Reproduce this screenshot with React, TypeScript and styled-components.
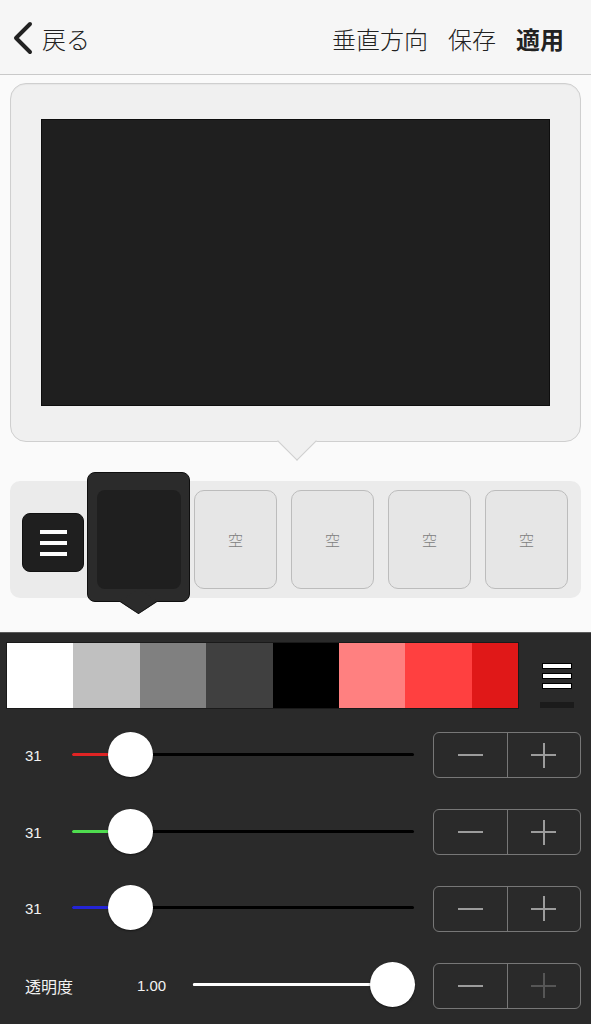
import React from 'react'
import styled, { createGlobalStyle } from 'styled-components'

const GlobalStyle = createGlobalStyle`
    html, body {
        margin: 0;
        padding: 0;
        background: #fafafa;
    }
    * {
        box-sizing: border-box;
    }
`

const JP = `"Noto Sans CJK JP", "Noto Sans", sans-serif`
const LATIN = `"Liberation Sans", "Noto Sans CJK JP", sans-serif`

type Channel = {
    label: string
    value: number
    fill: string
}

const CHANNELS: Channel[] = [
    { label: "31", value: 31 / 255, fill: "#e02424" },
    { label: "31", value: 31 / 255, fill: "#4fdc4f" },
    { label: "31", value: 31 / 255, fill: "#2424d6" },
]

const SWATCHES = ["#ffffff", "#c0c0c0", "#808080", "#404040", "#000000", "#ff8080", "#ff4040", "#e01818"]

const THUMB = 45

const Slider: React.FC<{ width: number; value: number; fill: string; rest: string }> = ({ width, value, fill, rest }) => {
    const center = THUMB / 2 + value * (width - THUMB)
    return (
        <SliderBox $width={width}>
            <TrackLine $color={rest} />
            <TrackFill style={{ width: center, background: fill }} />
            <Thumb style={{ left: center - THUMB / 2 }} />
        </SliderBox>
    )
}

const Stepper: React.FC<{ plusDisabled?: boolean }> = ({ plusDisabled }) => (
    <StepperBox>
        <StepButton>
            <MinusGlyph />
        </StepButton>
        <StepButton $divider>
            <PlusGlyph $disabled={plusDisabled} />
        </StepButton>
    </StepperBox>
)

const App: React.FC = () => {
    return (
        <>
            <GlobalStyle />
            <Root>
                <Header>
                    <BackButton>
                        <svg width="22" height="34" viewBox="0 0 22 34">
                            <polyline points="18,3 4,17 18,31" fill="none" stroke="#222" strokeWidth="4" strokeLinecap="round" strokeLinejoin="round" />
                        </svg>
                        <HeaderText>戻る</HeaderText>
                    </BackButton>
                    <HeaderActions>
                        <HeaderText>垂直方向</HeaderText>
                        <HeaderText>保存</HeaderText>
                        <HeaderText $bold>適用</HeaderText>
                    </HeaderActions>
                </Header>

                <Content>
                    <PreviewBubble>
                        <Screen />
                    </PreviewBubble>

                    <SlotStrip>
                        <MenuButton>
                            <Bars $width={27} $height={4} $gap={7} />
                        </MenuButton>
                        <SelectedSlot>
                            <SelectedInner />
                        </SelectedSlot>
                        <EmptySlots>
                            {[0, 1, 2, 3].map((i) => (
                                <EmptySlot key={i}>空</EmptySlot>
                            ))}
                        </EmptySlots>
                    </SlotStrip>
                </Content>

                <Panel>
                    <SwatchRow>
                        <Swatches>
                            {SWATCHES.map((c, i) => (
                                <Swatch key={c} $color={c} $last={i === SWATCHES.length - 1} />
                            ))}
                        </Swatches>
                        <PaletteMenu>
                            <OutlinedBars>
                                <span />
                                <span />
                                <span />
                            </OutlinedBars>
                            <PaletteTab />
                        </PaletteMenu>
                    </SwatchRow>

                    {CHANNELS.map((ch, i) => (
                        <SliderRow key={i}>
                            <ValueLabel $width={47}>{ch.label}</ValueLabel>
                            <Slider width={342} value={ch.value} fill={ch.fill} rest="#000" />
                            <Spacer $width={19} />
                            <Stepper />
                        </SliderRow>
                    ))}

                    <SliderRow>
                        <AlphaLabel>透明度</AlphaLabel>
                        <ValueLabel $width={56}>1.00</ValueLabel>
                        <Slider width={222} value={1} fill="#fff" rest="#fff" />
                        <Spacer $width={18} />
                        <Stepper plusDisabled />
                    </SliderRow>
                </Panel>
            </Root>
        </>
    )
}

export default App

const Root = styled.div`
    width: 591px;
    height: 1024px;
    display: flex;
    flex-direction: column;
    overflow: hidden;
    background: #fafafa;
`

const Header = styled.div`
    height: 75px;
    flex: 0 0 75px;
    background: #f6f6f6;
    border-bottom: 1px solid #c9c9c9;
    display: flex;
    align-items: center;
    justify-content: space-between;
    padding: 3px 27px 0 12px;
`

const BackButton = styled.div`
    display: flex;
    align-items: center;
    gap: 8px;
    svg {
        margin-top: -2px;
    }
`

const HeaderActions = styled.div`
    display: flex;
    align-items: center;
    gap: 20px;
`

const HeaderText = styled.span<{ $bold?: boolean }>`
    font-family: ${JP};
    font-size: 24px;
    line-height: 30px;
    color: #222;
    font-weight: ${(p) => (p.$bold ? 700 : 300)};
`

const Content = styled.div`
    flex: 1;
    display: flex;
    flex-direction: column;
    padding: 8px 10px 0 10px;
    background: #fafafa;
`

const PreviewBubble = styled.div`
    position: relative;
    height: 359px;
    background: #f0f0f0;
    border: 1px solid #cfcfcf;
    border-radius: 16px;
    box-shadow: inset 0 1px 1px rgba(0, 0, 0, 0.04);
    display: flex;
    align-items: center;
    justify-content: center;

    &::after {
        content: "";
        position: absolute;
        left: 272px;
        bottom: -14px;
        width: 27px;
        height: 27px;
        background: #f0f0f0;
        border-right: 1px solid #cfcfcf;
        border-bottom: 1px solid #cfcfcf;
        transform: rotate(45deg);
    }
`

const Screen = styled.div`
    width: 509px;
    height: 287px;
    background: #1f1f1f;
    border: 1px solid #0e0e0e;
    margin-top: 0;
`

const SlotStrip = styled.div`
    margin-top: 39px;
    height: 117px;
    background: #ebebeb;
    border-radius: 10px;
    display: flex;
    align-items: center;
    padding: 0 13px 0 12px;
`

const MenuButton = styled.div`
    width: 63px;
    height: 59px;
    border-radius: 8px;
    background: #1f1f1f;
    border: 1px solid #111;
    display: flex;
    align-items: center;
    justify-content: center;
    margin-top: 6px;
`

const Bars = styled.div<{ $width: number; $height: number; $gap: number }>`
    width: ${(p) => p.$width}px;
    height: ${(p) => p.$height * 3 + p.$gap * 2}px;
    background: linear-gradient(
        to bottom,
        #fff 0 ${(p) => p.$height}px,
        transparent ${(p) => p.$height}px ${(p) => p.$height + p.$gap}px,
        #fff ${(p) => p.$height + p.$gap}px ${(p) => p.$height * 2 + p.$gap}px,
        transparent ${(p) => p.$height * 2 + p.$gap}px ${(p) => p.$height * 2 + p.$gap * 2}px,
        #fff ${(p) => p.$height * 2 + p.$gap * 2}px
    );
`

const SelectedSlot = styled.div`
    position: relative;
    width: 103px;
    height: 130px;
    margin: 0 4px 6px 3px;
    background: #2b2b2b;
    border: 1px solid #0f0f0f;
    border-radius: 8px;
    padding: 17px 8px 0 9px;
    z-index: 1;

    &::after {
        content: "";
        position: absolute;
        left: 37px;
        bottom: -14px;
        width: 26px;
        height: 26px;
        background: #2b2b2b;
        border-right: 1px solid #0f0f0f;
        border-bottom: 1px solid #0f0f0f;
        transform: scaleY(0.66) rotate(45deg);
        z-index: -1;
    }
`

const SelectedInner = styled.div`
    width: 84px;
    height: 99px;
    border-radius: 8px;
    background: #1f1f1f;
`

const EmptySlots = styled.div`
    display: flex;
    gap: 14px;
`

const EmptySlot = styled.div`
    width: 83px;
    height: 99px;
    border-radius: 10px;
    background: #e6e6e6;
    border: 1.5px solid #bcbcbc;
    display: flex;
    align-items: center;
    justify-content: center;
    font-family: ${JP};
    font-size: 15px;
    font-weight: 300;
    color: #808080;
`

const Panel = styled.div`
    flex: 0 0 392px;
    height: 392px;
    background: #2a2a2a;
    border-top: 1px solid #5a5a5a;
    padding-top: 9px;
    display: flex;
    flex-direction: column;
`

const SwatchRow = styled.div`
    display: flex;
    height: 67px;
    margin-bottom: 8px;
`

const Swatches = styled.div`
    display: flex;
    margin-left: 6px;
    width: 513px;
    overflow: hidden;
    border: 1px solid #1a1a1a;
`

const Swatch = styled.div<{ $color: string; $last?: boolean }>`
    flex: 0 0 ${(p) => (p.$last ? 49 : 66.4)}px;
    background: ${(p) => p.$color};
`

const PaletteMenu = styled.div`
    flex: 1;
    display: flex;
    flex-direction: column;
    align-items: center;
    padding-top: 21px;
    padding-left: 3px;
`

const OutlinedBars = styled.div`
    display: flex;
    flex-direction: column;
    gap: 4px;
    span {
        display: block;
        width: 30px;
        height: 6px;
        background: #fff;
        border: 1px solid #000;
    }
`

const PaletteTab = styled.div`
    margin-top: 13px;
    width: 34px;
    height: 6px;
    background: #1b1b1b;
`

const SliderRow = styled.div`
    height: 77px;
    display: flex;
    align-items: center;
    padding-left: 25px;
`

const ValueLabel = styled.div<{ $width: number }>`
    width: ${(p) => p.$width}px;
    font-family: ${LATIN};
    font-size: 15px;
    color: #f2f2f2;
`

const AlphaLabel = styled.div`
    width: 112px;
    font-family: ${JP};
    font-size: 16px;
    color: #f2f2f2;
`

const Spacer = styled.div<{ $width: number }>`
    width: ${(p) => p.$width}px;
`

const SliderBox = styled.div<{ $width: number }>`
    position: relative;
    width: ${(p) => p.$width}px;
    height: ${THUMB}px;
    margin-top: -2px;
`

const TrackLine = styled.div<{ $color: string }>`
    position: absolute;
    left: 0;
    right: 0;
    top: 21px;
    height: 3px;
    border-radius: 2px;
    background: ${(p) => p.$color};
`

const TrackFill = styled.div`
    position: absolute;
    left: 0;
    top: 21px;
    height: 3px;
    border-radius: 2px;
`

const Thumb = styled.div`
    position: absolute;
    top: 0;
    width: ${THUMB}px;
    height: ${THUMB}px;
    border-radius: 50%;
    background: #fff;
    box-shadow: 0 1px 2px rgba(0, 0, 0, 0.5);
`

const StepperBox = styled.div`
    width: 148px;
    height: 46px;
    border: 1.5px solid #777;
    border-radius: 6px;
    display: flex;
`

const StepButton = styled.div<{ $divider?: boolean }>`
    flex: 1;
    display: flex;
    align-items: center;
    justify-content: center;
    border-left: ${(p) => (p.$divider ? "1.5px solid #777" : "none")};
`

const MinusGlyph = styled.div`
    width: 25px;
    height: 2px;
    background: #9c9c9c;
`

const PlusGlyph = styled.div<{ $disabled?: boolean }>`
    position: relative;
    width: 25px;
    height: 25px;
    &::before,
    &::after {
        content: "";
        position: absolute;
        background: ${(p) => (p.$disabled ? "#565656" : "#9c9c9c")};
    }
    &::before {
        left: 0;
        right: 0;
        top: 11.5px;
        height: 2px;
    }
    &::after {
        top: 0;
        bottom: 0;
        left: 11.5px;
        width: 2px;
    }
`
